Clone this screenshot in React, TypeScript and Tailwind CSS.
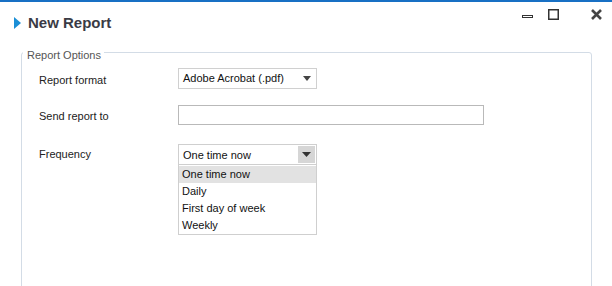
import React from "react";

export default function App() {
  const options = ["One time now", "Daily", "First day of week", "Weekly"];
  return (
    <div className="w-[612px] h-[286px] bg-white border-t-2 border-[#1870c4] overflow-hidden font-['Liberation_Sans',Arial,sans-serif]">
      <div className="flex h-[40px]">
        <div className="flex items-center h-[20px] mt-[11px] ml-[14px]">
          <svg width="7" height="12" viewBox="0 0 7 12">
            <polygon points="0,0 7,6 0,12" fill="#1b8fd6" />
          </svg>
          <span className="ml-[7px] text-[15px] leading-[20px] font-bold text-[#3a3b45]">New Report</span>
        </div>
        <div className="ml-auto mr-[10px] mt-[7px] flex items-start">
          <svg width="11" height="11" viewBox="0 0 11 11">
            <rect x="0.5" y="6.5" width="10" height="2" fill="none" stroke="#333" strokeWidth="1" />
          </svg>
          <svg className="ml-[15px]" width="11" height="11" viewBox="0 0 11 11">
            <rect x="0.75" y="0.75" width="9.5" height="9.5" fill="none" stroke="#333" strokeWidth="1.5" />
          </svg>
          <svg className="ml-[32px]" width="11" height="11" viewBox="0 0 11 11">
            <path d="M1 1 L10 10 M10 1 L1 10" stroke="#444" strokeWidth="2.6" />
          </svg>
        </div>
      </div>
      <fieldset className="ml-[21px] mr-[20px] h-[280px] border border-[#d3dce6] rounded-[3px]">
        <legend className="ml-[1px] pl-[4px] pr-[3px] pt-[6px] text-[11px] leading-[14px] text-[#555]">Report Options</legend>
        <div className="pl-[17px] mt-[6px] text-[11px] text-[#222]">
          <div className="flex h-[21px]">
            <div className="w-[139px] pt-[4px] leading-[16px]">Report format</div>
            <div className="w-[139px] h-[21px] border border-[#d0d0d0] flex items-center pl-[4px] pr-[5px] text-[#111]">
              <span className="leading-[16px] pb-[2px]">Adobe Acrobat (.pdf)</span>
              <svg className="ml-auto" width="8" height="5" viewBox="0 0 8 5">
                <polygon points="0,0 8,0 4,5" fill="#444" />
              </svg>
            </div>
          </div>
          <div className="flex h-[20px] mt-[16px]">
            <div className="w-[139px] pt-[3px] leading-[16px]">Send report to</div>
            <div className="w-[306px] h-[20px] border border-[#b9b9b9]" />
          </div>
          <div className="flex h-[21px] mt-[19px]">
            <div className="w-[139px] pt-[2px] leading-[16px]">Frequency</div>
            <div className="relative w-[139px] h-[21px]">
              <div className="w-full h-full border border-[#cfcfcf] flex items-start pl-[4px] text-[#111]">
                <span className="leading-[16px] mt-[2px]">One time now</span>
                <div className="ml-auto mr-[1px] mt-[1px] w-[17px] h-[17px] bg-[#d6d6d6] flex items-center justify-center">
                  <svg width="9" height="5" viewBox="0 0 9 5">
                    <polygon points="0,0 9,0 4.5,5" fill="#333" />
                  </svg>
                </div>
              </div>
              <div className="absolute left-0 top-full w-[139px] pt-[1px] border border-t-0 border-[#cfcfcf] bg-white text-[#111]">
                {options.map((o, i) => (
                  <div
                    key={o}
                    className={i === 0 ? "h-[17px] leading-[17px] pl-[3px] bg-[#e2e2e2]" : "h-[17px] leading-[17px] pl-[3px]"}
                  >
                    {o}
                  </div>
                ))}
              </div>
            </div>
          </div>
        </div>
      </fieldset>
    </div>
  );
}
